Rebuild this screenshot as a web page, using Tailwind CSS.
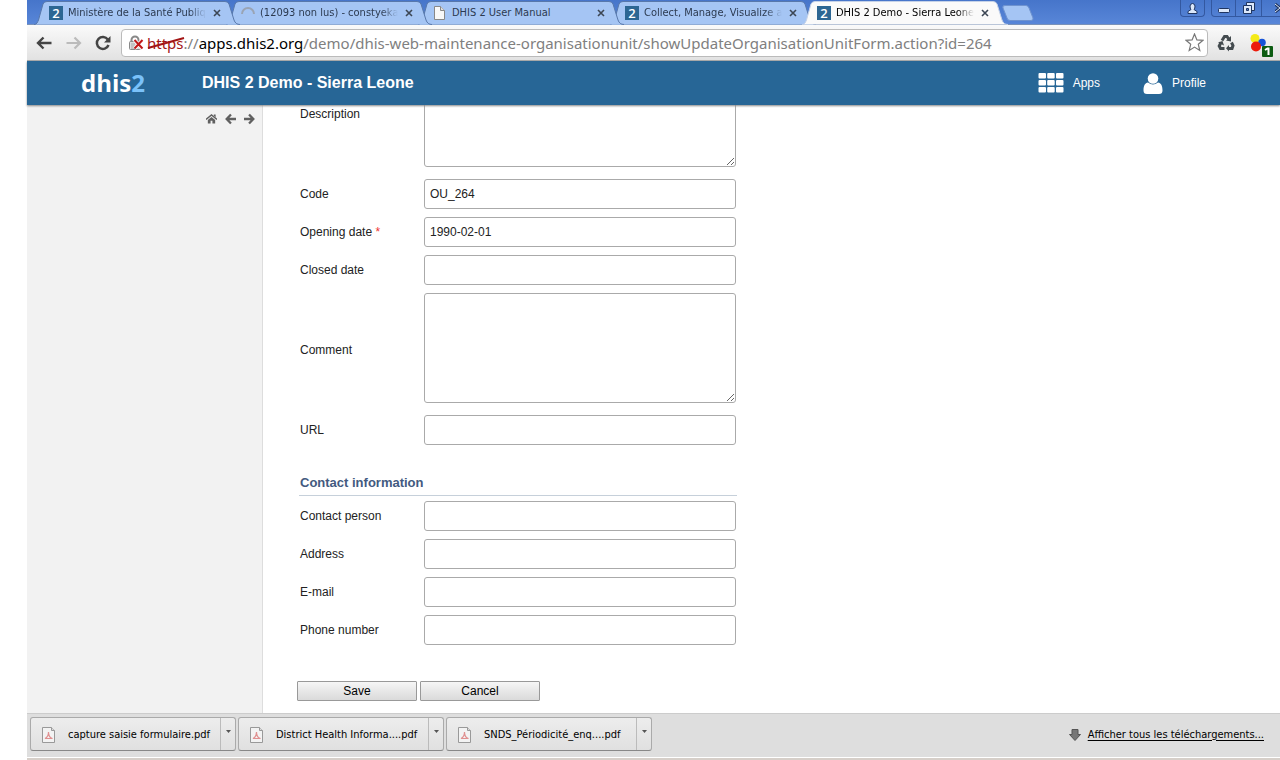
<!DOCTYPE html>
<html lang="fr">

<head>
	<meta charset="UTF-8">
	<meta name="viewport" content="width=device-width, initial-scale=1.0">
	<title>DHIS 2 Demo - Sierra Leone</title>
	<script src="https://cdn.jsdelivr.net/npm/@tailwindcss/browser@4"></script>
</head>

<body class="bg-white min-h-screen flex flex-col pl-[27px] overflow-x-hidden text-xs text-[#222] font-['Liberation_Sans',Arial,sans-serif]">
	<svg class="hidden">
		<symbol id="tab" viewBox="0 0 206 25" preserveAspectRatio="none">
			<path d="M0 24.5C3 24.5 3.500 22 4.500 20L9 4Q10 1.500 13 1.500H191Q194 1.500 195 4L200 20Q201.500 24.500 206 24.500" />
		</symbol>
		<symbol id="close" viewBox="0 0 8 8">
			<path d="M1 1l6 6M7 1l-6 6" stroke="#3c4654" stroke-width="1.600" />
		</symbol>
		<symbol id="pdf" viewBox="0 0 14 16">
			<path d="M.5.5h9l3 3v12H.5z" fill="#f3f3f3" stroke="#999" />
			<path d="M9.500.5v3h3" fill="#ddd" stroke="#999" />
			<path d="M3 11.500h7.500c-2-.5-4-2-4-6.500c0 3-1.500 5.500-3.500 6.500z" fill="none" stroke="#e09090" stroke-width="1.200" />
		</symbol>
		<symbol id="caret" viewBox="0 0 5 3">
			<path d="M0 0h5L2.500 3z" fill="#555" />
		</symbol>
	</svg>

	<!-- TABS -->
	<nav class="h-[25px] shrink-0 flex justify-between bg-linear-to-b from-[#4675ca] to-[#5886d8] font-['DejaVu_Sans_Condensed','DejaVu_Sans',sans-serif] text-[11px] leading-4 text-[#2c3a50] border-b border-[#7a92b8]">
		<div class="flex pl-[7px] isolate">
			<div class="relative z-[4] w-48 h-[25px] flex items-center pl-[15px]">
				<svg class="absolute left-0 top-0 w-[206px] h-[25px] -z-10 fill-[#a5c5f4] stroke-[#5878ab]"><use href="#tab" /></svg>
				<span class="w-[14px] h-[14px] bg-[#2c6693] text-white font-['Open_Sans',sans-serif] font-semibold text-[13px] leading-[14px] text-center">2</span>
				<a href="#" class="ml-[5px] w-[138px] overflow-hidden whitespace-nowrap mask-r-from-88%">Ministère de la Santé Publiqu</a>
				<button aria-label="Fermer" class="ml-[7px]"><svg class="w-2 h-2"><use href="#close" /></svg></button>
			</div>
			<div class="relative z-[3] w-48 h-[25px] flex items-center pl-[15px]">
				<svg class="absolute left-0 top-0 w-[206px] h-[25px] -z-10 fill-[#a5c5f4] stroke-[#5878ab]"><use href="#tab" /></svg>
				<svg class="w-[14px] h-[14px]" viewBox="0 0 14 14" fill="none" stroke="#9aa4b4" stroke-width="2"><path d="M1 8a6 6 0 0 1 12 0" /></svg>
				<a href="#" class="ml-[5px] w-[138px] overflow-hidden whitespace-nowrap mask-r-from-88%">(12093 non lus) - constyeka</a>
				<button aria-label="Fermer" class="ml-[7px]"><svg class="w-2 h-2"><use href="#close" /></svg></button>
			</div>
			<div class="relative z-[2] w-48 h-[25px] flex items-center pl-[15px]">
				<svg class="absolute left-0 top-0 w-[206px] h-[25px] -z-10 fill-[#a5c5f4] stroke-[#5878ab]"><use href="#tab" /></svg>
				<svg class="w-[14px] h-[14px]" viewBox="0 0 14 14"><path d="M1.500.5h6l4 4v9h-10z" fill="#f8f8f8" stroke="#888" /><path d="M7.500.5v4h4" fill="#ddd" stroke="#888" /></svg>
				<a href="#" class="ml-[5px] w-[138px] overflow-hidden whitespace-nowrap">DHIS 2 User Manual</a>
				<button aria-label="Fermer" class="ml-[7px]"><svg class="w-2 h-2"><use href="#close" /></svg></button>
			</div>
			<div class="relative z-[1] w-48 h-[25px] flex items-center pl-[15px]">
				<svg class="absolute left-0 top-0 w-[206px] h-[25px] -z-10 fill-[#a5c5f4] stroke-[#5878ab]"><use href="#tab" /></svg>
				<span class="w-[14px] h-[14px] bg-[#2c6693] text-white font-['Open_Sans',sans-serif] font-semibold text-[13px] leading-[14px] text-center">2</span>
				<a href="#" class="ml-[5px] w-[138px] overflow-hidden whitespace-nowrap mask-r-from-88%">Collect, Manage, Visualize an</a>
				<button aria-label="Fermer" class="ml-[7px]"><svg class="w-2 h-2"><use href="#close" /></svg></button>
			</div>
			<div class="relative z-[5] w-48 h-[25px] flex items-center pl-[15px] text-black">
				<svg class="absolute left-0 top-0 w-[206px] h-[25px] -z-10 fill-[#fafafa] stroke-[#c5d2e8]"><use href="#tab" /></svg>
				<span class="w-[14px] h-[14px] bg-[#2c6693] text-white font-['Open_Sans',sans-serif] font-semibold text-[13px] leading-[14px] text-center">2</span>
				<a href="#" class="ml-[5px] w-[138px] overflow-hidden whitespace-nowrap mask-r-from-88%">DHIS 2 Demo - Sierra Leone</a>
				<button aria-label="Fermer" class="ml-[7px]"><svg class="w-2 h-2"><use href="#close" /></svg></button>
			</div>
			<button aria-label="Nouvel onglet" class="ml-2 mt-[5px] self-start">
				<svg class="w-8 h-4" viewBox="0 0 32 16"><path d="M1 3Q0 .5 3 .5H24Q26 .5 27 3L31 13Q31.500 15.500 29 15.500H8Q5.500 15.500 5 13z" fill="#a5c5f4" stroke="#6f93cf" /></svg>
			</button>
		</div>
		<div class="flex h-[17px] text-[#1f3561]">
			<button aria-label="Utilisateur" class="w-[25px] mr-[6px] border border-t-0 border-[#3358a0] rounded-b-sm flex justify-center items-center">
				<svg class="w-[11px] h-[11px]" viewBox="0 0 11 11" fill="#dce8fa" stroke="currentColor"><path d="M1 10.500V8.500L4 6.500Q3 5.500 3 3Q3.500.5 5.500.5T8 3Q8 5.500 7 6.500L10 8.500V10.500z" /></svg>
			</button>
			<button aria-label="Réduire" class="w-[25px] border border-t-0 border-[#3358a0] rounded-bl-sm flex justify-center items-end pb-[3px]">
				<svg class="w-3 h-[5px]" viewBox="0 0 12 5"><rect x=".5" y=".5" width="11" height="4" rx="1" fill="#dce8fa" stroke="currentColor" /></svg>
			</button>
			<button aria-label="Restaurer" class="w-[25px] border-b border-[#3358a0] flex justify-center items-center">
				<svg class="w-3 h-3" viewBox="0 0 12 12" fill="#dce8fa" stroke="currentColor"><path d="M3.500.5h8v8h-8z" /><path d="M.5 3.500h8v8h-8z" /><path d="M3.500 6.500h2v2h-2z" fill="#5582d4" /></svg>
			</button>
			<button aria-label="Fermer la fenêtre" class="w-[19px] border-b border-l border-[#3358a0] flex justify-end items-center overflow-hidden">
				<svg class="w-[5px] h-[10px]" viewBox="0 0 5 10" fill="none"><path d="M0 1l5 4-5 4" stroke="currentColor" stroke-width="3" /><path d="M0 1l5 4-5 4" stroke="#dce8fa" /></svg>
			</button>
		</div>
	</nav>

	<!-- ADDRESS BAR -->
	<div class="h-9 shrink-0 flex items-center bg-linear-to-b from-[#fafafa] to-[#e2e2e2] border-b border-[#aaa] pl-[9px] pr-[6px] overflow-hidden">
		<button aria-label="Précédent"><svg class="w-4 h-[14px]" viewBox="0 0 16 14" fill="none" stroke="#444" stroke-width="2.400"><path d="M15.500 7H2M7.500 1.500L2 7l5.500 5.500" /></svg></button>
		<button aria-label="Suivant" class="ml-[14px]"><svg class="w-4 h-[14px]" viewBox="0 0 16 14" fill="none" stroke="#bbb" stroke-width="2.200"><path d="M.5 7H14M8.500 1.500L14 7l-5.500 5.500" /></svg></button>
		<button aria-label="Actualiser" class="ml-[13px]"><svg class="w-4 h-4" viewBox="0 0 16 16"><path d="M12.800 4.500A6 6 0 1 0 13.500 10" fill="none" stroke="#444" stroke-width="2.500" /><path d="M15.500 1v6.500H9z" fill="#444" /></svg></button>
		<div class="ml-[10px] flex-1 min-w-0 h-7 flex items-center bg-white border border-[#bbb] rounded-sm pl-[6px] pr-[3px]">
			<svg class="w-4 h-4 shrink-0" viewBox="0 0 16 16">
				<path d="M3.500 8V5a3.500 3.500 0 0 1 7 0V8" fill="none" stroke="#888" stroke-width="2" />
				<rect x="1.500" y="6.500" width="11" height="8" rx="1" fill="#ddd" stroke="#888" />
				<path d="M3 9h4M3 11h4M3 13h4" stroke="#aaa" />
				<path d="M6.500 5l8 8.500M14.500 5L6.500 13.500" stroke="#fff" stroke-width="3.500" />
				<path d="M6.500 5l8 8.500M14.500 5L6.500 13.500" stroke="#c01818" stroke-width="2" />
			</svg>
			<div class="relative flex-1 min-w-0 ml-[3px] whitespace-nowrap overflow-hidden text-[15px] leading-6 text-[#808080] font-['Noto_Sans',sans-serif]">
				<span class="text-[#a31515]">https</span>://<span class="text-black">apps.dhis2.org</span>/demo/dhis-web-maintenance-organisationunit/showUpdateOrganisationUnitForm.action?id=264
				<svg class="absolute left-0 top-[5px] w-[38px] h-[14px]" viewBox="0 0 38 14"><path d="M1 12L37 2" stroke="#a31515" stroke-width="2" /></svg>
			</div>
			<button aria-label="Favori"><svg class="w-[19px] h-[19px]" viewBox="0 0 19 19"><path d="M9.500 1l2.400 5.900 6.100.4-4.700 4 1.500 6.200-5.300-3.400-5.300 3.400 1.500-6.200-4.700-4 6.100-.4z" fill="#fff" stroke="#777" stroke-width="1.200" /></svg></button>
		</div>
		<button aria-label="Recyclage" class="ml-[9px]">
			<svg class="w-[18px] h-[18px]" viewBox="0 0 18 18" fill="none" stroke="#444b4f" stroke-width="3">
				<path d="M5 6.500L7.500 2.500H10L12 5.500" /><path d="M14.500 8.500l1.500 3-1 3h-4" /><path d="M7.500 14.500H3.500L2.200 12l1.800-3.500" />
				<path d="M9 6.500l5 1V2zM12 11v6.500l-3-3.200zM1 8.500l4.500-1.500 1.500 4.500z" fill="#444b4f" stroke="none" />
			</svg>
		</button>
		<button aria-label="Extension" class="ml-[15px] pt-[6px]">
			<svg class="w-6 h-6" viewBox="0 0 24 24">
				<circle cx="5" cy="4.500" r="4.500" fill="#f4ea18" /><circle cx="12" cy="8.500" r="3.800" fill="#1653d8" /><circle cx="6" cy="12.500" r="5" fill="#ec1c0c" />
				<rect x="12" y="12" width="11" height="11" rx="1" fill="#0c5c12" />
				<path d="M15 16l2.500-1.500h1V21" stroke="#fff" stroke-width="2" fill="none" />
			</svg>
		</button>
	</div>

	<!-- HEADER -->
	<header class="relative z-10 h-11 shrink-0 flex items-center bg-[#276696] text-white shadow-[0_1px_2px_#888] pl-[54px] pr-[74px]">
		<a href="#" class="w-[121px] font-['Open_Sans',sans-serif] font-bold text-2xl">dhis<span class="text-[#7ac1f9]">2</span></a>
		<h1 class="flex-1 font-bold text-base">DHIS 2 Demo - Sierra Leone</h1>
		<a href="#" class="flex items-center gap-[9px]">
			<svg class="w-[26px] h-5" viewBox="0 0 26 20" fill="#fff">
				<rect x=".5" width="7.500" height="5.500" rx="1" /><rect x="9.200" width="7.500" height="5.500" rx="1" /><rect x="18" width="7.500" height="5.500" rx="1" />
				<rect x=".5" y="7" width="7.500" height="5.500" rx="1" /><rect x="9.200" y="7" width="7.500" height="5.500" rx="1" /><rect x="18" y="7" width="7.500" height="5.500" rx="1" />
				<rect x=".5" y="14" width="7.500" height="5.500" rx="1" /><rect x="9.200" y="14" width="7.500" height="5.500" rx="1" /><rect x="18" y="14" width="7.500" height="5.500" rx="1" />
			</svg>
			Apps
		</a>
		<a href="#" class="ml-[43px] flex items-center gap-[9px]">
			<svg class="w-5 h-[21px]" viewBox="0 0 20 21" fill="#fff"><path d="M5 9.500C2 10 .5 12.500.5 17.500Q.5 21 4 21h12q3.500 0 3.500-3.500c0-5-1.500-7.500-4.500-8Q10 13.500 5 9.500z" /><circle cx="10" cy="5.500" r="5.300" /></svg>
			Profile
		</a>
	</header>

	<main class="flex-1 flex overflow-hidden">
		<aside class="w-[236px] shrink-0 bg-[#f2f2f2] border-r border-[#ddd] flex justify-end items-start gap-2 pt-2 pr-[7px]">
			<a href="#" aria-label="Home"><svg class="w-[11px] h-3" viewBox="0 0 12 12"><path d="M0 6.500l6-5 6 5" fill="none" stroke="#606060" stroke-width="1.600" /><path d="M8.500 1h2v3l-2-1.500zM2 7l4-3.300L10 7v4H7V8H5v3H2z" fill="#606060" /></svg></a>
			<a href="#" aria-label="Back"><svg class="w-[11px] h-3" viewBox="0 0 12 12" fill="none" stroke="#606060" stroke-width="2.500"><path d="M12 6H2M6.500 1L1.800 6l4.700 5" /></svg></a>
			<a href="#" aria-label="Forward"><svg class="w-[11px] h-3" viewBox="0 0 12 12" fill="none" stroke="#606060" stroke-width="2.500"><path d="M0 6h10M5.500 1l4.700 5-4.700 5" /></svg></a>
		</aside>

		<form class="-mt-12 ml-[37px] pb-3">
			<div class="grid grid-cols-[124px_312px] gap-y-2 items-center">
				<label for="description">Description</label>
				<textarea id="description" class="h-[110px] mb-1 px-[5px] py-1 border border-[#aaa] rounded-[3px] bg-white resize"></textarea>
				<label for="code">Code</label>
				<input id="code" type="text" value="OU_264" class="h-[30px] px-[5px] border border-[#aaa] rounded-[3px] bg-white">
				<label for="opening">Opening date <em class="not-italic text-[#e33]">*</em></label>
				<input id="opening" type="text" value="1990-02-01" class="h-[30px] px-[5px] border border-[#aaa] rounded-[3px] bg-white">
				<label for="closed">Closed date</label>
				<input id="closed" type="text" class="h-[30px] px-[5px] border border-[#aaa] rounded-[3px] bg-white">
				<label for="comment">Comment</label>
				<textarea id="comment" class="h-[110px] mb-1 px-[5px] py-1 border border-[#aaa] rounded-[3px] bg-white resize"></textarea>
				<label for="url">URL</label>
				<input id="url" type="text" class="h-[30px] px-[5px] border border-[#aaa] rounded-[3px] bg-white">
			</div>

			<h2 class="mt-[29px] mb-[5px] -mx-px px-px pb-[3px] border-b border-[#c6d0da] font-bold text-[13px] leading-[18px] text-[#435a80]">Contact information</h2>

			<div class="grid grid-cols-[124px_312px] gap-y-2 items-center">
				<label for="person">Contact person</label>
				<input id="person" type="text" class="h-[30px] px-[5px] border border-[#aaa] rounded-[3px] bg-white">
				<label for="address">Address</label>
				<input id="address" type="text" class="h-[30px] px-[5px] border border-[#aaa] rounded-[3px] bg-white">
				<label for="email">E-mail</label>
				<input id="email" type="text" class="h-[30px] px-[5px] border border-[#aaa] rounded-[3px] bg-white">
				<label for="phone">Phone number</label>
				<input id="phone" type="text" class="h-[30px] px-[5px] border border-[#aaa] rounded-[3px] bg-white">
			</div>

			<div class="mt-9 -ml-[3px] flex gap-[3px] text-black">
				<button type="button" class="w-[120px] h-5 border border-[#999] rounded-[1px] bg-linear-to-b from-[#f6f6f6] to-[#dadada]">Save</button>
				<button type="button" class="w-[120px] h-5 border border-[#999] rounded-[1px] bg-linear-to-b from-[#f6f6f6] to-[#dadada]">Cancel</button>
			</div>
		</form>
	</main>

	<!-- DOWNLOADS -->
	<footer class="h-[47px] shrink-0 flex items-start bg-[#dedede] border-t border-[#ccc] border-b-2 border-b-[#d6cfc9] shadow-[inset_0_-1px_#fff] pt-[3px] pl-[3px] pr-4 gap-[2px] font-['DejaVu_Sans_Condensed','DejaVu_Sans',sans-serif] text-[11px] text-black">
		<div class="w-[206px] h-[34px] flex border border-[#aaa] border-b-[#888] rounded-[3px] bg-linear-to-b from-[#ededed] to-[#e0e0e0]">
			<button class="flex-1 flex items-center pl-[11px] pt-[2px] gap-3 whitespace-nowrap"><svg class="w-[14px] h-4"><use href="#pdf" /></svg>capture saisie formulaire.pdf</button>
			<button aria-label="Options" class="w-[15px] border-l border-[#bbb] flex justify-center pt-3"><svg class="w-[5px] h-[3px]"><use href="#caret" /></svg></button>
		</div>
		<div class="w-[206px] h-[34px] flex border border-[#aaa] border-b-[#888] rounded-[3px] bg-linear-to-b from-[#ededed] to-[#e0e0e0]">
			<button class="flex-1 flex items-center pl-[11px] pt-[2px] gap-3 whitespace-nowrap"><svg class="w-[14px] h-4"><use href="#pdf" /></svg>District Health Informa....pdf</button>
			<button aria-label="Options" class="w-[15px] border-l border-[#bbb] flex justify-center pt-3"><svg class="w-[5px] h-[3px]"><use href="#caret" /></svg></button>
		</div>
		<div class="w-[206px] h-[34px] flex border border-[#aaa] border-b-[#888] rounded-[3px] bg-linear-to-b from-[#ededed] to-[#e0e0e0]">
			<button class="flex-1 flex items-center pl-[11px] pt-[2px] gap-3 whitespace-nowrap"><svg class="w-[14px] h-4"><use href="#pdf" /></svg>SNDS_Périodicité_enq....pdf</button>
			<button aria-label="Options" class="w-[15px] border-l border-[#bbb] flex justify-center pt-3"><svg class="w-[5px] h-[3px]"><use href="#caret" /></svg></button>
		</div>
		<a href="#" class="ml-auto h-9 flex items-center gap-[7px]">
			<svg class="w-3 h-3" viewBox="0 0 12 12"><path d="M3 .5h6v5h2.500L6 11.500.5 5.500H3z" fill="#777" stroke="#555" /></svg>
			<span class="underline underline-offset-2">Afficher tous les téléchargements...</span>
		</a>
	</footer>
</body>

</html>
